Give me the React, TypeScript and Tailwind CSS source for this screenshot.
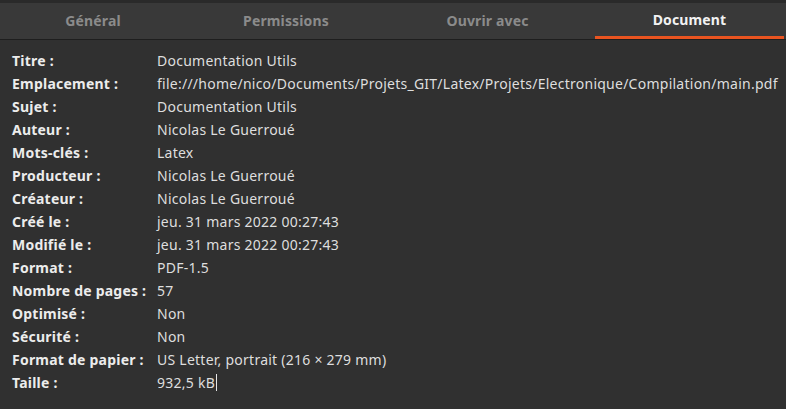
import React from "react";

const rows: [string, string][] = [
  ["Titre :", "Documentation Utils"],
  ["Emplacement :", "file:///home/nico/Documents/Projets_GIT/Latex/Projets/Electronique/Compilation/main.pdf"],
  ["Sujet :", "Documentation Utils"],
  ["Auteur :", "Nicolas Le Guerroué"],
  ["Mots-clés :", "Latex"],
  ["Producteur :", "Nicolas Le Guerroué"],
  ["Créateur :", "Nicolas Le Guerroué"],
  ["Créé le :", "jeu. 31 mars 2022 00:27:43"],
  ["Modifié le :", "jeu. 31 mars 2022 00:27:43"],
  ["Format :", "PDF-1.5"],
  ["Nombre de pages :", "57"],
  ["Optimisé :", "Non"],
  ["Sécurité :", "Non"],
  ["Format de papier :", "US Letter, portrait (216 × 279 mm)"],
  ["Taille :", "932,5 kB"],
];

export default function App() {
  return (
    <div
      className="w-[786px] h-[409px] bg-[#303030] overflow-hidden flex flex-col"
      style={{ fontFamily: '"Noto Sans", "DejaVu Sans", sans-serif' }}
    >
      <div className="h-[3px] bg-[#2a2a2a]" />
      <div className="h-[37px] bg-[#393939] border-b border-[#1e1e1e] flex text-[14px] font-bold tracking-[0.15px]">
        <div className="w-[186px] flex items-center justify-center text-[#8b8b8b] pb-[2px]">Général</div>
        <div className="w-[200px] flex items-center justify-center text-[#8b8b8b] pb-[2px]">Permissions</div>
        <div className="w-[203px] flex items-center justify-center text-[#8b8b8b] pb-[2px]">Ouvrir avec</div>
        <div className="flex-1 flex flex-col pl-[6px] pr-[2px]">
          <div className="flex-1 flex items-center justify-center text-[#f2f2f2]">Document</div>
          <div className="h-[3px] bg-[#e95420]" />
        </div>
      </div>
      <div className="pt-[9px] pl-[12px] flex flex-col text-[14px]">
        {rows.map(([k, v]) => (
          <div key={k} className="flex h-[23px] items-center">
            <div className="w-[145px] font-bold text-[#ececec] tracking-[0.22px]">{k}</div>
            <div className="text-[#dedede] flex items-center whitespace-nowrap tracking-[0.25px]">
              {v}
              {k === "Taille :" && <span className="inline-block w-[1px] h-[17px] bg-[#e6e6e6] ml-[1px]" />}
            </div>
          </div>
        ))}
      </div>
    </div>
  );
}
